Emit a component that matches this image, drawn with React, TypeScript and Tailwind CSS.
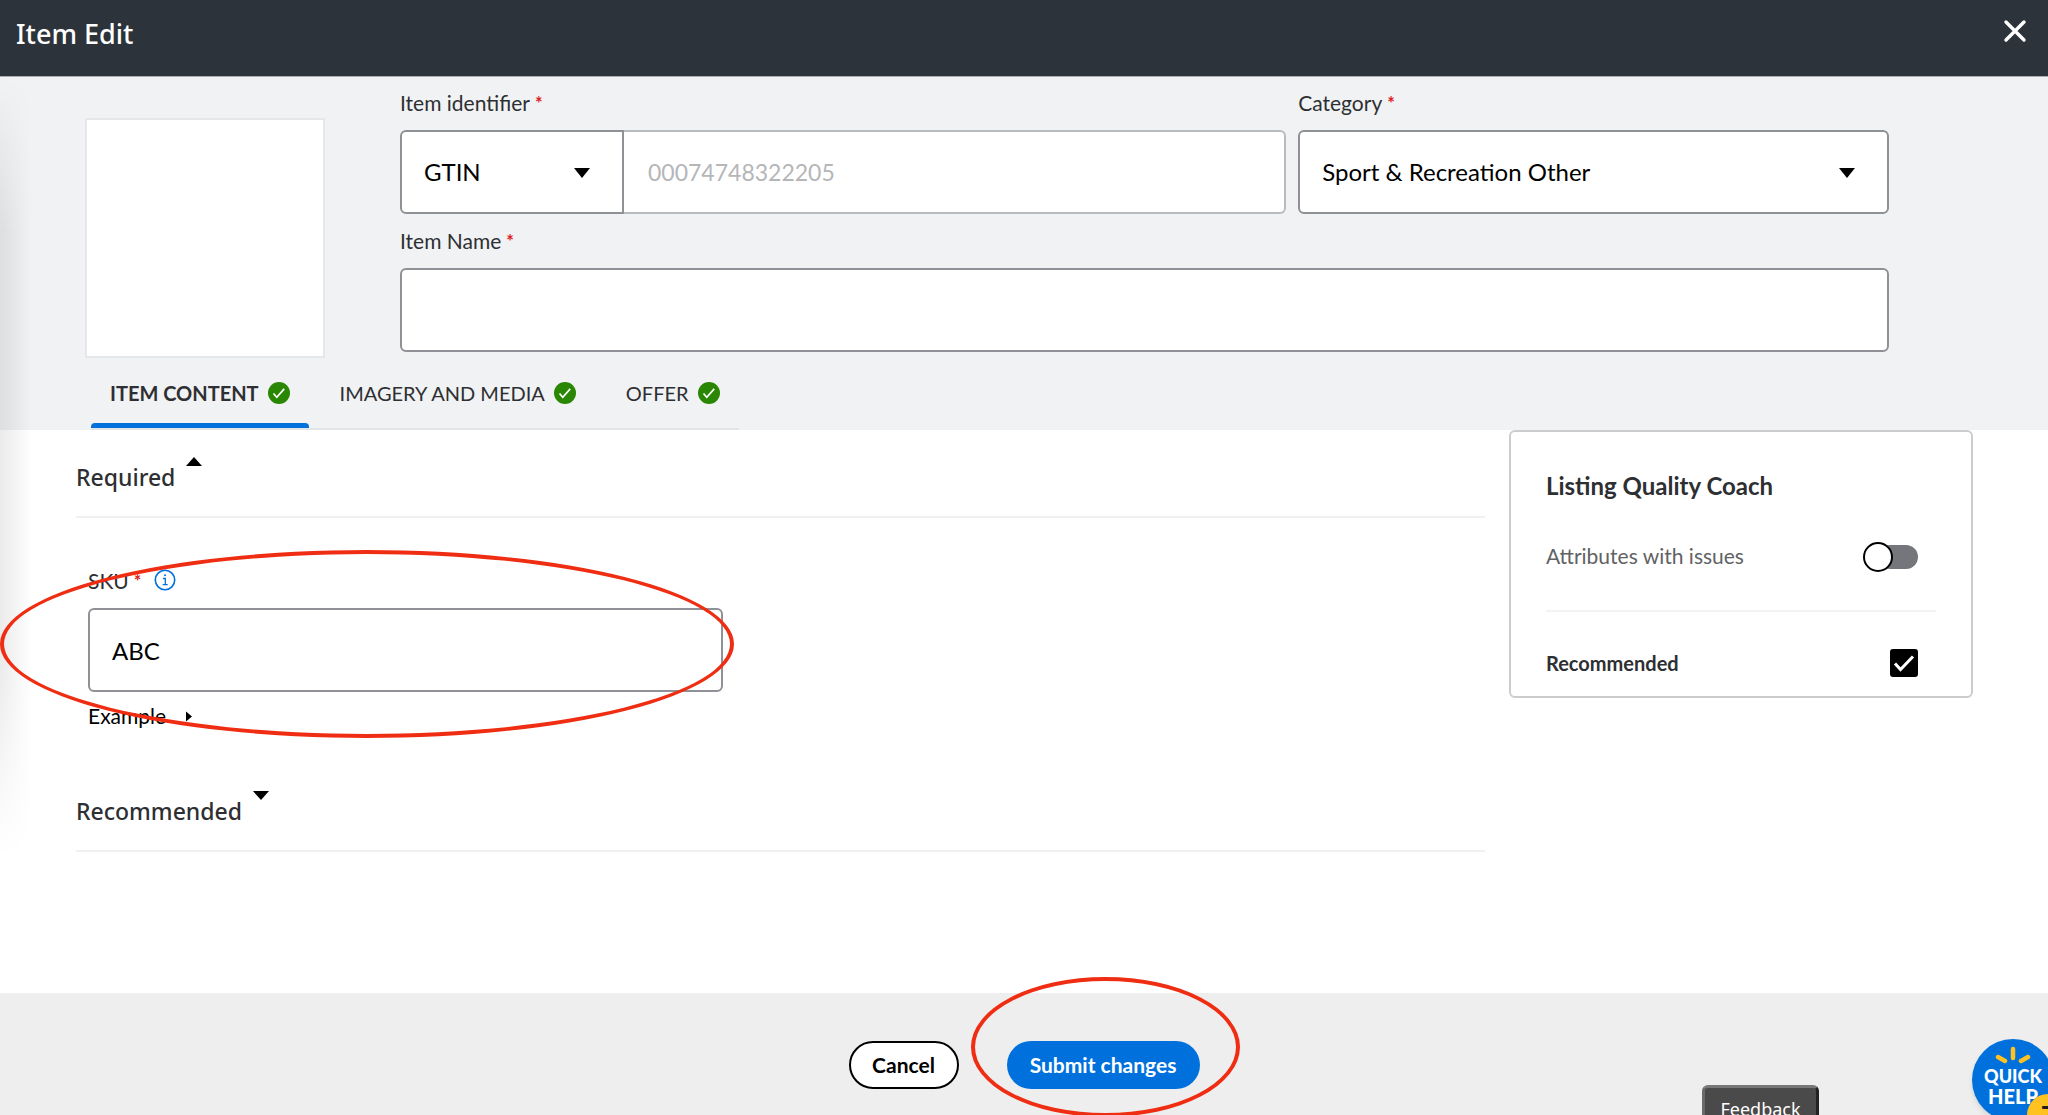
import { useState } from "react";
import type { ReactNode } from "react";
import { clsx } from "clsx";

const tabs = ["ITEM CONTENT", "IMAGERY AND MEDIA", "OFFER"];

export default function App() {
  return (
    <div className="relative flex min-h-screen flex-col overflow-hidden bg-white font-['Lato',sans-serif] text-[#2e2f32]">
      <header className="flex h-[77px] items-start justify-between border-b border-[#a9acb0] bg-[#2d333a] pr-[21px] pl-4 text-white">
        <h1 className="pt-3 font-['Noto_Sans',sans-serif] text-[27px] leading-[44px] font-medium">Item Edit</h1>
        <button type="button" aria-label="Close" className="mt-[19px] cursor-pointer">
          <svg className="h-6 w-6" viewBox="0 0 24 24" fill="none" stroke="currentColor" strokeWidth="3.4" strokeLinecap="round" aria-hidden="true">
            <path d="M3 3l18 18M21 3L3 21" />
          </svg>
        </button>
      </header>

      <ItemSummary />

      <div className="flex flex-1 items-start gap-6 pr-[75px] pb-16 pl-[76px]">
        <main className="min-w-0 flex-1">
          <SectionHeading title="Required" open />
          <SkuField />
          <SectionHeading title="Recommended" />
        </main>
        <QualityCoach />
      </div>

      <footer className="flex h-[122px] items-start justify-center gap-12 bg-[#eeeeee] pt-12">
        <button
          type="button"
          className="h-12 w-[110px] cursor-pointer rounded-full border-2 border-black bg-white text-[21px] font-bold text-black"
        >
          Cancel
        </button>
        <div className="relative">
          <button
            type="button"
            className="h-12 w-[193px] cursor-pointer rounded-full bg-[#0071dc] text-[21px] font-bold text-white"
          >
            Submit changes
          </button>
          <Ring className="-top-16 -left-9 h-[140px] w-[269px]" />
        </div>
      </footer>

      <div
        className="pointer-events-none absolute top-[77px] left-0 h-[780px] w-8 bg-linear-to-r from-black/8 to-transparent mask-[linear-gradient(to_bottom,transparent,black_20%,black_75%,transparent)]"
        aria-hidden="true"
      />
      <button
        type="button"
        className="absolute right-[229px] -bottom-[18px] h-12 w-[117px] cursor-pointer rounded-t-md border-[3px] border-t-[#777777] border-r-[#222222] border-b-[#222222] border-l-[#6a6a6a] bg-[#4a4a4a] font-['Noto_Sans',sans-serif] text-[18px] text-white"
      >
        Feedback
      </button>
      <QuickHelp />
    </div>
  );
}

function ItemSummary() {
  const [activeTab, setActiveTab] = useState(tabs[0]);

  return (
    <section className="bg-[#f1f2f4]">
      <div className="flex items-start gap-[75px] pr-[159px] pl-[85px]">
        <div className="mt-[41px] h-60 w-60 shrink-0 border-2 border-[#e6e7e8] bg-white" />

        <div className="min-w-0 flex-1 pt-3">
          <div className="grid grid-cols-[3fr_2fr] gap-3">
            <div>
              <FieldLabel htmlFor="identifier">Item identifier</FieldLabel>
              <div className="flex">
                <Select
                  id="identifier-type"
                  label="Identifier type"
                  value="GTIN"
                  className="w-[224px] shrink-0 rounded-l-md"
                />
                <input
                  id="identifier"
                  disabled
                  placeholder="00074748322205"
                  className="h-[84px] min-w-0 flex-1 rounded-r-md border-2 border-l-0 border-[#babbbe] bg-white px-6 text-[23px] placeholder:text-[#b5b6b8]"
                />
              </div>
            </div>
            <div>
              <FieldLabel htmlFor="category">Category</FieldLabel>
              <Select id="category" value="Sport & Recreation Other" className="w-full rounded-md" />
            </div>
          </div>
          <div className="mt-[13px]">
            <FieldLabel htmlFor="item-name">Item Name</FieldLabel>
            <input
              id="item-name"
              className="block h-[84px] w-full rounded-md border-2 border-[#909196] bg-white px-6 text-[24px] text-black"
            />
          </div>
        </div>
      </div>

      <div role="tablist" className="ml-[91px] flex w-fit gap-3 border-b-2 border-[#e3e4e8]">
        {tabs.map((tab) => {
          const active = tab === activeTab;
          return (
            <button
              key={tab}
              type="button"
              role="tab"
              aria-selected={active}
              onClick={() => setActiveTab(tab)}
              className={clsx(
                "relative flex h-[70px] cursor-pointer items-center gap-[9px] px-[19px] text-[20px]",
                active && "font-bold",
              )}
            >
              {tab}
              <CheckBadge />
              {active && <span className="absolute inset-x-0 bottom-0 h-[5px] rounded-t-sm bg-[#0071dc]" />}
            </button>
          );
        })}
      </div>
    </section>
  );
}

function FieldLabel({ htmlFor, children }: { htmlFor: string; children: ReactNode }) {
  return (
    <label htmlFor={htmlFor} className="flex h-[41px] gap-[5px] pt-[2px] text-[21px] leading-6">
      {children}
      <Asterisk />
    </label>
  );
}

function Asterisk() {
  return <span className="text-[18px] leading-6 font-bold text-[#de1c24]">*</span>;
}

function Select({
  id,
  label,
  value,
  className,
}: {
  id: string;
  label?: string;
  value: string;
  className?: string;
}) {
  return (
    <div className={clsx("relative h-[84px] overflow-hidden border-2 border-[#909196] bg-white", className)}>
      <select id={id} aria-label={label} className="h-full w-full cursor-pointer appearance-none bg-transparent pr-16 pl-[22px] text-[24px] text-black">
        <option>{value}</option>
      </select>
      <Triangle className="pointer-events-none absolute top-9 right-8 h-[10px] w-4" />
    </div>
  );
}

function Triangle({ className }: { className?: string }) {
  return (
    <svg className={className} viewBox="0 0 16 10" preserveAspectRatio="none" fill="black" aria-hidden="true">
      <path d="M0 0h16L8 10z" />
    </svg>
  );
}

function CheckBadge() {
  return (
    <svg className="h-[22px] w-[22px]" viewBox="0 0 22 22" aria-hidden="true">
      <circle cx="11" cy="11" r="11" fill="#2a8703" />
      <path d="M5.5 11.5l3.3 3.7 7.4-8.3" fill="none" stroke="white" strokeWidth="1.7" />
    </svg>
  );
}

function SectionHeading({ title, open = false }: { title: string; open?: boolean }) {
  return (
    <div className="h-[88px] border-b-2 border-[#eff0f1] pt-[27px]">
      <button type="button" aria-expanded={open} className="flex cursor-pointer items-start gap-[11px]">
        <h2 className="pt-1 font-['Noto_Sans',sans-serif] text-[23px] leading-8 font-medium">{title}</h2>
        <Triangle className={clsx("h-[9px] w-4", open && "rotate-180")} />
      </button>
    </div>
  );
}

function SkuField() {
  return (
    <div className="ml-3 h-[246px] w-[635px] max-w-full pt-[51px]">
      <div className="relative">
        <div className="flex h-[39px] items-start gap-[13px]">
          <label htmlFor="sku" className="flex gap-[5px] text-[21px] leading-6">
            SKU
            <Asterisk />
          </label>
          <button type="button" aria-label="About SKU" className="cursor-pointer text-[#0071dc]">
            <svg className="h-[22px] w-[22px]" viewBox="0 0 22 22" fill="none" stroke="currentColor" aria-hidden="true">
              <circle cx="11" cy="11" r="9.7" strokeWidth="1.6" />
              <path d="M9 9.5h2.3v6M8.7 15.6h5" strokeWidth="1.3" />
              <circle cx="11" cy="6.3" r="1" fill="currentColor" stroke="none" />
            </svg>
          </button>
        </div>
        <input
          id="sku"
          defaultValue="ABC"
          className="block h-[84px] w-full rounded-md border-2 border-[#909196] bg-white px-[22px] text-[24px] text-black"
        />
        <button type="button" aria-expanded={false} className="mt-3 flex cursor-pointer items-center gap-5 text-[21px] leading-6 text-black">
          Example
          <svg className="h-[11px] w-[6px]" viewBox="0 0 6 10" aria-hidden="true">
            <path d="M0 0l6 5-6 5z" />
          </svg>
        </button>
        <Ring className="-top-[19px] -left-[88px] h-[188px] w-[734px]" />
      </div>
    </div>
  );
}

// Red callout drawn over a control.
function Ring({ className }: { className?: string }) {
  return (
    <span
      className={clsx("pointer-events-none absolute z-10 rounded-[50%] border-4 border-[#ef2d12]", className)}
      aria-hidden="true"
    />
  );
}

function QualityCoach() {
  const [issuesOnly, setIssuesOnly] = useState(false);

  return (
    <aside className="h-[268px] w-[464px] shrink-0 rounded-md border-2 border-[#cbccce] bg-white pr-[35px] pl-[35px]">
      <h2 className="pt-[38px] text-[24px] leading-8 font-bold">Listing Quality Coach</h2>
      <div className="mt-8 flex h-[78px] items-start justify-between border-b-2 border-[#f3f3f4] pr-[18px]">
        <label htmlFor="issues" className="pt-[10px] text-[21px] leading-6 text-[#616264]">
          Attributes with issues
        </label>
        <button
          id="issues"
          type="button"
          role="switch"
          aria-checked={issuesOnly}
          onClick={() => setIssuesOnly(!issuesOnly)}
          className={clsx("mt-2 flex h-[30px] w-[55px] cursor-pointer items-center", issuesOnly && "flex-row-reverse")}
        >
          <span className="z-10 h-[30px] w-[30px] shrink-0 rounded-full border-2 border-black bg-white" />
          <span className="-mx-[15px] h-6 w-10 shrink-0 rounded-full bg-[#74767c]" />
        </button>
      </div>
      <div className="mt-[37px] flex items-center justify-between pr-[18px]">
        <label htmlFor="recommended" className="text-[20px] leading-7 font-bold">
          Recommended
        </label>
        <span className="relative h-7 w-7">
          <input
            id="recommended"
            type="checkbox"
            defaultChecked
            className="peer block h-7 w-7 cursor-pointer appearance-none rounded-[3px] border-2 border-black checked:bg-black"
          />
          <svg
            className="pointer-events-none absolute inset-0 hidden h-7 w-7 peer-checked:block"
            viewBox="0 0 28 28"
            fill="none"
            stroke="white"
            strokeWidth="3"
            aria-hidden="true"
          >
            <path d="M5 14.5l5.5 6L23 7.5" />
          </svg>
        </span>
      </div>
    </aside>
  );
}

function QuickHelp() {
  return (
    <button
      type="button"
      className="absolute -right-[6px] -bottom-[6px] flex h-[82px] w-[82px] cursor-pointer flex-col items-center rounded-full bg-[#0071dc] pt-[5px] font-black text-white shadow-md"
    >
      <svg className="h-[22px] w-9 shrink-0" viewBox="0 0 36 22" stroke="#ffc220" strokeWidth="4.5" strokeLinecap="round" aria-hidden="true">
        <path d="M18 5v9M3 13l7 4M33 13l-7 4" />
      </svg>
      <span className="text-[18px] leading-5">QUICK</span>
      <span className="text-[20px] leading-5">HELP</span>
      <span className="absolute top-[55px] left-[55px] flex h-[42px] w-[42px] items-center justify-center rounded-full bg-[#ffc220] text-[24px] text-[#1c1c1c]">
        7
      </span>
    </button>
  );
}
